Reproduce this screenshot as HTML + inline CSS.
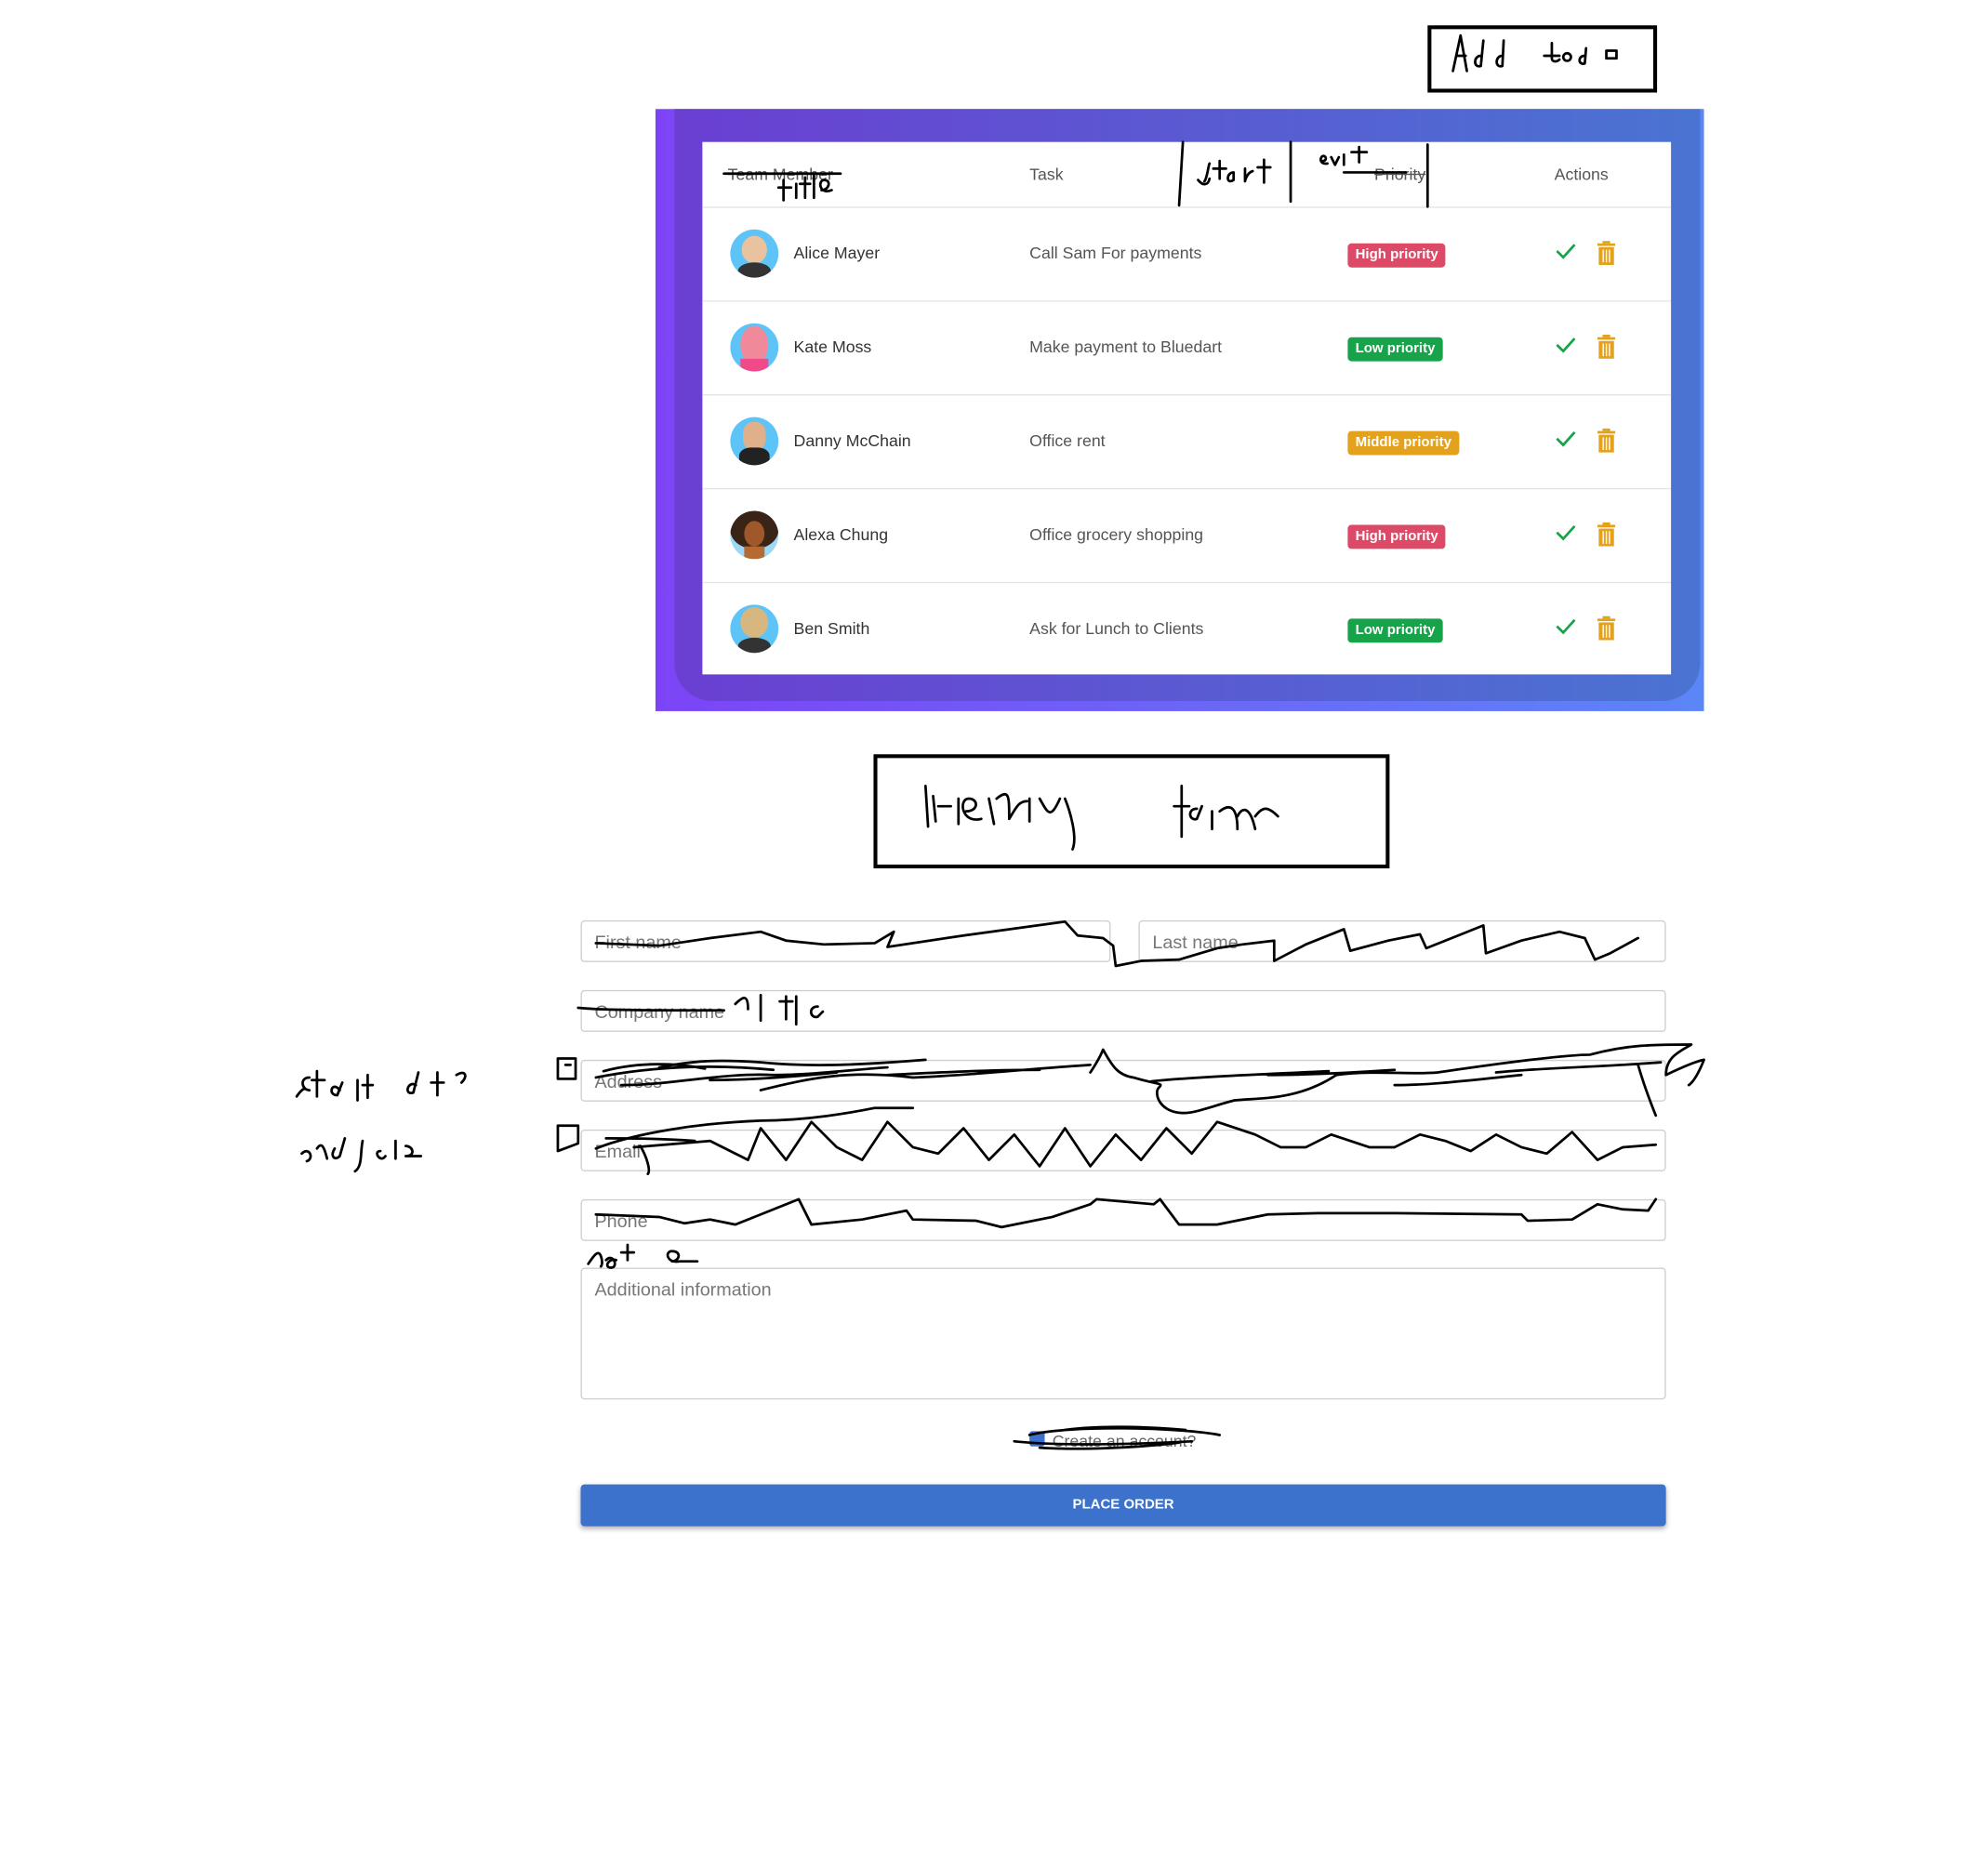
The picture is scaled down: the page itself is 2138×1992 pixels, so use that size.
<!DOCTYPE html>
<html><head><meta charset="utf-8"><style>
html,body{margin:0;padding:0;background:#fff;}
body{width:2138px;height:1992px;overflow:hidden;position:relative;font-family:"Liberation Sans",Arial,sans-serif;}
#w{position:absolute;left:0;top:0;width:1568px;height:1461px;transform:scale(1.3635);transform-origin:0 0;}
.a{position:absolute;}
.panel{left:517px;top:86px;width:827px;height:475px;background:linear-gradient(90deg,#7c44f6,#5b86f8);}
.inner{left:532px;top:86px;width:809px;height:467px;background:linear-gradient(90deg,#6a3fd2,#4a74d2);border-radius:0 0 30px 30px;}
.card{left:554px;top:112px;width:764px;height:420px;background:#fff;}
.hd{position:absolute;top:0;left:0;width:764px;height:51px;border-bottom:1px solid #e4e4e4;font-size:13px;color:#555;}
.hd span{position:absolute;top:18px;}
.row{position:absolute;left:0;width:764px;height:73px;border-bottom:1px solid #e4e4e4;font-size:13px;color:#444;}
.row:last-child{border-bottom:none;}
.av{position:absolute;left:22px;top:17px;width:38px;height:38px;border-radius:50%;background:#5ec4f7;overflow:hidden;}
.nm{position:absolute;left:72px;top:28px;color:#333;}
.tk{position:absolute;left:258px;top:28px;color:#555;}
.bd{position:absolute;left:509px;top:28px;height:19px;line-height:19px;padding:0 6px;border-radius:3px;color:#fff;font-size:11px;font-weight:bold;}
.hi{background:#dc4a68}.lo{background:#17a34a}.mi{background:#e4a11b}
.ck{position:absolute;left:672px;top:27px;}
.tr{position:absolute;left:705px;top:26px;}
.in{position:absolute;border:1px solid #cfcfcf;border-radius:3px;box-sizing:border-box;font-size:14.5px;color:#777;padding:9px 10px;background:transparent;}
.btn{left:458px;top:1171px;width:856px;height:33px;background:#3c71cc;border-radius:3px;color:#fff;font-size:11px;font-weight:bold;text-align:center;line-height:33px;box-shadow:0 2px 4px rgba(0,0,0,.3);}
svg{position:absolute;left:0;top:0;}
</style></head><body><div id="w">
<div class="a" style="left:1126px;top:20px;width:175px;height:47px;border:3px solid #000;"></div>
<div class="a panel"></div>
<div class="a inner"></div>
<div class="a card">
 <div class="hd"><span style="left:20px;text-decoration:line-through;">Team Member</span><span style="left:258px;">Task</span><span style="left:530px;text-decoration:line-through;">Priority</span><span style="left:672px;">Actions</span></div>
 <div style="position:absolute;top:52px;left:0;">
 <div class="row" style="top:0"><div class="av"><div style="position:absolute;left:9px;top:5px;width:20px;height:22px;border-radius:50%;background:#e9c29f"></div><div style="position:absolute;left:6px;top:26px;width:26px;height:14px;background:#333;border-radius:50% 50% 0 0"></div></div><span class="nm">Alice Mayer</span><span class="tk">Call Sam For payments</span><span class="bd hi">High priority</span><svg class="ck" width="18" height="14" viewBox="0 0 18 14" style="position:absolute"><path d="M2 7l5 5L16 2" fill="none" stroke="#17a34a" stroke-width="2"/></svg><svg class="tr" width="16" height="19" viewBox="0 0 16 19" style="position:absolute"><rect x="5" y="0" width="6" height="2" fill="#e4a11b"/><rect x="1" y="2" width="14" height="2" fill="#e4a11b"/><rect x="2" y="5" width="12" height="14" fill="#e4a11b"/><path d="M5.5 7v10M8 7v10M10.5 7v10" stroke="#fff" stroke-width="1"/></svg></div>
 <div class="row" style="top:74px"><div class="av"><div style="position:absolute;left:8px;top:2px;width:22px;height:30px;border-radius:50%;background:#f08a9a"></div><div style="position:absolute;left:8px;top:28px;width:22px;height:12px;background:#f04a8a"></div></div><span class="nm">Kate Moss</span><span class="tk">Make payment to Bluedart</span><span class="bd lo">Low priority</span><svg class="ck" width="18" height="14" viewBox="0 0 18 14" style="position:absolute"><path d="M2 7l5 5L16 2" fill="none" stroke="#17a34a" stroke-width="2"/></svg><svg class="tr" width="16" height="19" viewBox="0 0 16 19" style="position:absolute"><rect x="5" y="0" width="6" height="2" fill="#e4a11b"/><rect x="1" y="2" width="14" height="2" fill="#e4a11b"/><rect x="2" y="5" width="12" height="14" fill="#e4a11b"/><path d="M5.5 7v10M8 7v10M10.5 7v10" stroke="#fff" stroke-width="1"/></svg></div>
 <div class="row" style="top:148px"><div class="av"><div style="position:absolute;left:10px;top:4px;width:18px;height:22px;background:#e0b08a;border-radius:40%"></div><div style="position:absolute;left:7px;top:24px;width:24px;height:16px;background:#222;border-radius:40% 40% 0 0"></div></div><span class="nm">Danny McChain</span><span class="tk">Office rent</span><span class="bd mi">Middle priority</span><svg class="ck" width="18" height="14" viewBox="0 0 18 14" style="position:absolute"><path d="M2 7l5 5L16 2" fill="none" stroke="#17a34a" stroke-width="2"/></svg><svg class="tr" width="16" height="19" viewBox="0 0 16 19" style="position:absolute"><rect x="5" y="0" width="6" height="2" fill="#e4a11b"/><rect x="1" y="2" width="14" height="2" fill="#e4a11b"/><rect x="2" y="5" width="12" height="14" fill="#e4a11b"/><path d="M5.5 7v10M8 7v10M10.5 7v10" stroke="#fff" stroke-width="1"/></svg></div>
 <div class="row" style="top:222px"><div class="av" style="background:#9fd8f7"><div style="position:absolute;left:0;top:0;width:38px;height:30px;border-radius:50%;background:#3a2418"></div><div style="position:absolute;left:11px;top:8px;width:16px;height:20px;border-radius:50%;background:#a0582a"></div><div style="position:absolute;left:11px;top:28px;width:16px;height:10px;background:#b46a30"></div></div><span class="nm">Alexa Chung</span><span class="tk">Office grocery shopping</span><span class="bd hi">High priority</span><svg class="ck" width="18" height="14" viewBox="0 0 18 14" style="position:absolute"><path d="M2 7l5 5L16 2" fill="none" stroke="#17a34a" stroke-width="2"/></svg><svg class="tr" width="16" height="19" viewBox="0 0 16 19" style="position:absolute"><rect x="5" y="0" width="6" height="2" fill="#e4a11b"/><rect x="1" y="2" width="14" height="2" fill="#e4a11b"/><rect x="2" y="5" width="12" height="14" fill="#e4a11b"/><path d="M5.5 7v10M8 7v10M10.5 7v10" stroke="#fff" stroke-width="1"/></svg></div>
 <div class="row" style="top:296px"><div class="av"><div style="position:absolute;left:8px;top:2px;width:22px;height:24px;border-radius:50%;background:#d8b680"></div><div style="position:absolute;left:6px;top:26px;width:26px;height:14px;background:#333;border-radius:50% 50% 0 0"></div></div><span class="nm">Ben Smith</span><span class="tk">Ask for Lunch to Clients</span><span class="bd lo">Low priority</span><svg class="ck" width="18" height="14" viewBox="0 0 18 14" style="position:absolute"><path d="M2 7l5 5L16 2" fill="none" stroke="#17a34a" stroke-width="2"/></svg><svg class="tr" width="16" height="19" viewBox="0 0 16 19" style="position:absolute"><rect x="5" y="0" width="6" height="2" fill="#e4a11b"/><rect x="1" y="2" width="14" height="2" fill="#e4a11b"/><rect x="2" y="5" width="12" height="14" fill="#e4a11b"/><path d="M5.5 7v10M8 7v10M10.5 7v10" stroke="#fff" stroke-width="1"/></svg></div>
 </div>
</div>
<div class="a" style="left:689px;top:595px;width:401px;height:84px;border:3px solid #000;"></div>
<div class="in" style="left:458px;top:726px;width:418px;height:33px;">First name</div>
<div class="in" style="left:898px;top:726px;width:416px;height:33px;">Last name</div>
<div class="in" style="left:458px;top:781px;width:856px;height:33px;">Company name</div>
<div class="in" style="left:458px;top:836px;width:856px;height:33px;">Address</div>
<div class="in" style="left:458px;top:891px;width:856px;height:33px;">Email</div>
<div class="in" style="left:458px;top:946px;width:856px;height:33px;">Phone</div>
<div class="in" style="left:458px;top:1000px;width:856px;height:104px;">Additional information</div>
<div class="a" style="left:812px;top:1129px;width:12px;height:12px;background:#3c71cc;border-radius:2px;"></div>
<div class="a" style="left:830px;top:1129px;font-size:13px;color:#666;">Create an account?</div>
<div class="a btn">PLACE ORDER</div>
<svg width="1568" height="1461" viewBox="0 0 1568 1461" fill="none" stroke="#000" stroke-width="2" stroke-linecap="round" stroke-linejoin="round">
<path d="M1146 56l6-28 5 28M1149 44h7M1168 44c-6 0-6 10 0 8l2-20M1185 44c-6 0-6 10 0 8l1-20M1218 44h12M1224 34v12c0 3 4 3 6 1M1236 42a3 3 0 1 0 0.1 0M1250 44c-6 0-5 8 0 6l1-12M1267 40h8v6h-8z"/>
<path d="M571 137h92M614 148h10M618 142v16M628 145v11M631 145h8M635 140v16M642 138v18M648 150c6 0 8-8 2-8-5 0-4 12 6 8"/>
<path d="M933 112l-3 50M1018 112v47M1126 114v49M950 143c2-2 3-12 4-14 M945 142c4 5 8 4 9-1M957 133h10M962 127v14M973 136c-6 0-6 10 0 6v-6M982 133v10c1-4 3-7 6-8M992 132h10M997 126v18M1060 136h49M1043 127c4 0 3-4 1-4-3 0-4 7 3 6M1050 124l3 6 3-6M1060 122v8M1066 120h12M1072 116v12"/>
<path d="M812 1132c30-8 120-6 150 0M800 1137c40 4 100 2 140 0M820 1142c30 2 80 0 110-4M840 1128c30-4 70-2 95 0"/>
<path d="M470 744L520 746 560 740 600 735 620 742 650 745 690 744 705 735 700 747 760 738 840 727 850 738 870 740 878 746 880 762 900 758 930 757 960 748 980 745 1005 742 1005 758 1030 745 1060 733 1065 750 1095 742 1120 737 1125 748 1140 742 1170 730 1172 752 1200 742 1230 735 1250 740 1258 757 1270 752 1292 740"/>
<path d="M456 795c20 2 60 2 115 2M580 792c6-6 10-8 10 4M600 785v20M615 790h10M620 786v18M628 786v22M645 794c-8 0-6 10 0 8l4-4"/>
<path d="M476 845c30-8 60-6 80-2M470 850c50-10 100-10 140-6M490 856c40 0 80-10 120-8 30 0 60-4 90-6M520 842c30-6 50-6 80-4 40 4 80 2 130-2M560 852c30 0 60-2 100-6M600 860c40-10 70-16 120-10 50-2 80-6 140-10M700 848c40-2 80-4 120-4M860 846c8-12 10-18 10-18 6 10 10 20 24 22 20 6 24 4 20 8-4 4 0 20 20 20 10 0 30-8 40-10 20-2 50 0 80-20 30-4 60 0 80-2 40-6 100-14 120-14 30-8 50-8 80-8-10 6-20 10-20 24 0 0 20-10 30-12 0 0-6 16-12 20M908 853c40-4 100-6 140-8M1000 848c30 0 70-2 100-4M1100 856c30 0 60-4 100-8M1180 846c40-4 80-4 130-8M1292 840c4 14 10 30 14 40"/>
<path d="M470 906c30-12 80-20 130-22 30 0 60-4 90-10l30 0M478 898c20 0 40 0 70 2M505 904c6 10 8 20 6 22"/>
<path d="M500 905L560 900 590 915 600 890 620 915 640 885 660 905 680 915 700 885 720 905 740 910 760 890 780 915 800 895 820 920 840 890 860 920 880 895 900 915 920 890 940 910 960 885 990 895 1010 905 1030 905 1050 895 1080 905 1100 905 1120 895 1140 900 1160 908 1180 895 1200 905 1220 910 1240 893 1260 915 1280 905 1306 903"/>
<path d="M470 958L520 960 540 965 560 962 580 966 600 958 630 946 640 966 680 962 715 955 720 962 770 963 790 968 830 960 860 950 865 946 910 950 915 946 930 966 960 966 1000 958 1040 957 1100 957 1200 958 1205 963 1240 962 1260 950 1280 954 1300 955 1306 946"/>
<path d="M464 997c4-6 8-12 10-6 2 6 0 8 0 8M478 994c6-6 10 6 4 6-6 0-2-8 4-6M490 988h10M495 982v12M530 995c6 0 8-8 0-8-6 0-4 10 6 8h14"/>
<path d="M730 620l2 32M736 628l2 20M740 636h10M756 630v20M762 640c10 0 10-10 2-10-8 0-6 20 10 16M780 630l4 20M786 630c10-8 10-2 10 16 6-10 8-14 14-14M812 630v18M820 630c6 10 8 18 16 0M840 630c4 10 10 30 6 40M932 620v40M926 636h12M944 638c-8 0-6 10 0 8l4-10M956 640v14M962 640c10-8 14 0 14 14M976 644c4-8 10-8 14 10M990 644c6-8 10-8 18 0"/>
<path d="M234 865c4-6 6-6 6-6M244 850c-8 0-6 10 0 10M250 845v20M246 852h10M268 860c-6-8-10 4-2 4l4-10M282 852v16M290 848v18M286 856h8M328 856c-6-4-10 8-2 6l4-16M340 854h10M345 846v18M360 848c6-4 10 0 4 6"/>
<path d="M440 835h14v16h-14zM446 840h4M440 888v20l16-6v-14zM238 910c6-6 10 4 4 6M250 906c4-6 6 0 8 8M264 906c-4 6 0 10 4 6l4-14M286 900c-2 10 0 20-6 24M300 908c-6 0 0 10 4 4M312 900v14M320 904c6 0 8 8 0 8h12"/>
</svg>
</div></body></html>
